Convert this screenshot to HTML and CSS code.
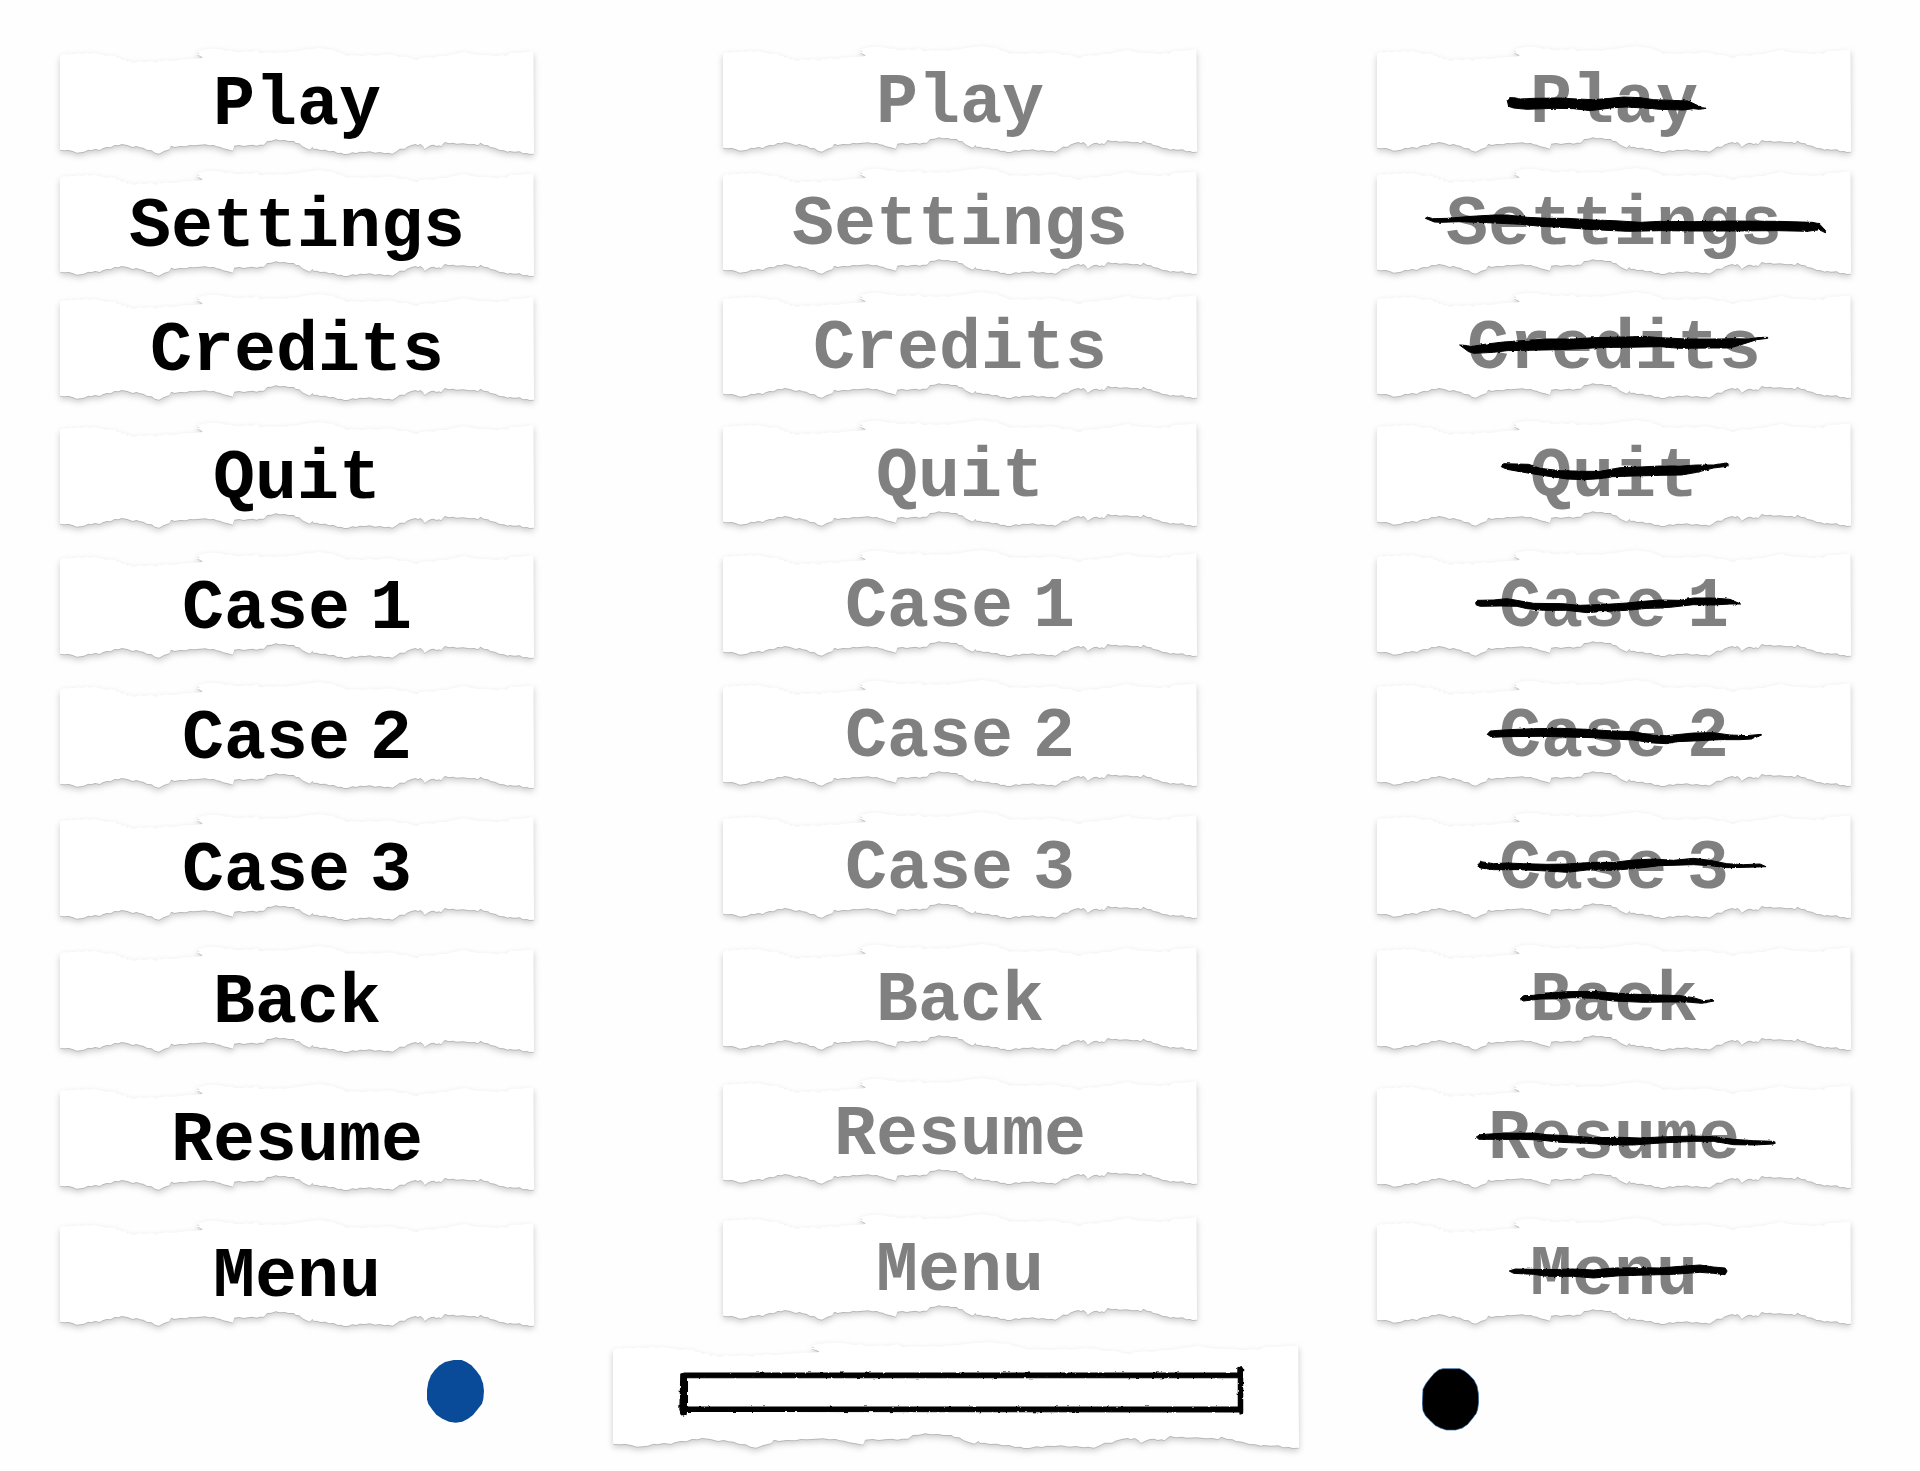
FILE: index.html
```html
<!DOCTYPE html>
<html lang="en">
<head>
<meta charset="utf-8">
<title>Menu buttons</title>
<link rel="stylesheet" href="styles.css">
</head>
<body>
<svg class="defs" width="0" height="0" aria-hidden="true">
  <symbol id="paper" viewBox="60 52 1423 318" preserveAspectRatio="none">
    <path d="M60 76L72 70 80 72 92 69 104 71 114 68 128 70 140 66 150 69 164 67 178 70 188 72 200 76 212 74 225 76 234 83 238 80 246 87 256 86 262 93 270 91 278 96 290 95 296 90 303 93 318 94 330 91 341 93 350 96 358 90 368 92 380 88 392 91 408 90 420 87 440 86 458 84 485 83 488 80 470 70 479 69 472 63 490 57 512 54 530 55 548 57 560 61 572 59 584 64 600 65 616 62 632 64 650 59 656 64 662 68 680 65 700 66 722 65 738 66 750 63 770 62 790 58 806 56 822 54 840 52 858 56 880 57 892 64 906 68 920 75 940 74 970 76 990 72 1010 75 1040 71 1062 73 1080 79 1100 78 1116 84 1130 89 1142 83 1160 80 1180 81 1200 76 1220 76 1240 70 1260 67 1275 63 1286 68 1310 72 1340 73 1375 77 1383 73 1400 75 1412 67 1440 66 1460 64 1482 62L1483 369 1470 370 1462 367 1450 368 1440 362 1424 363 1410 361 1404 363 1392 359 1380 358 1366 351 1352 349 1345 344 1334 343 1322 336 1315 344 1304 340 1290 341 1270 338 1250 339 1240 336 1228 338 1215 334 1204 347 1198 344 1190 346 1182 342 1174 343 1164 348 1155 355 1150 347 1142 340 1134 344 1128 340 1115 343 1102 348 1095 354 1080 354 1070 362 1058 369 1045 366 1036 368 1020 364 1006 366 990 362 976 364 960 363 950 367 938 365 926 369 915 371 904 366 894 367 882 361 868 362 856 357 842 358 830 354 822 355 818 349 810 357 798 352 788 347 778 338 768 337 762 331 745 331 735 328 720 329 708 326 695 330 682 331 672 342 660 342 650 345 638 342 624 344 612 346 598 343 583 345 579 360 564 356 550 353 540 348 530 347 522 343 508 344 496 341 480 342 462 344 450 343 438 347 420 346 404 349 394 345 388 356 372 361 357 369 345 366 335 359 322 358 310 351 300 350 290 346 278 349 262 343 245 340 236 344 224 343 212 350 200 349 188 353 180 358 166 355 152 359 145 357 132 363 110 366 98 361 86 358 72 359 60 357Z"/>
  </symbol>
  <filter id="ink" x="-5%" y="-50%" width="110%" height="200%">
    <feTurbulence type="fractalNoise" baseFrequency="0.09" numOctaves="2" seed="4"/>
    <feDisplacementMap in="SourceGraphic" scale="7" xChannelSelector="R" yChannelSelector="G"/>
  </filter>
</svg>

<main class="sheet">
  <div class="columns">
    <section class="column normal" aria-label="Normal">
      <button class="strip"><svg class="paper"><use href="#paper"/></svg><span class="label">Play</span></button>
      <button class="strip"><svg class="paper"><use href="#paper"/></svg><span class="label">Settings</span></button>
      <button class="strip"><svg class="paper"><use href="#paper"/></svg><span class="label">Credits</span></button>
      <button class="strip"><svg class="paper"><use href="#paper"/></svg><span class="label">Quit</span></button>
      <button class="strip"><svg class="paper"><use href="#paper"/></svg><span class="label">Case <span>1</span></span></button>
      <button class="strip"><svg class="paper"><use href="#paper"/></svg><span class="label">Case <span>2</span></span></button>
      <button class="strip"><svg class="paper"><use href="#paper"/></svg><span class="label">Case <span>3</span></span></button>
      <button class="strip"><svg class="paper"><use href="#paper"/></svg><span class="label">Back</span></button>
      <button class="strip"><svg class="paper"><use href="#paper"/></svg><span class="label">Resume</span></button>
      <button class="strip"><svg class="paper"><use href="#paper"/></svg><span class="label">Menu</span></button>
    </section>

    <section class="column hover" aria-label="Hover">
      <button class="strip"><svg class="paper"><use href="#paper"/></svg><span class="label">Play</span></button>
      <button class="strip"><svg class="paper"><use href="#paper"/></svg><span class="label">Settings</span></button>
      <button class="strip"><svg class="paper"><use href="#paper"/></svg><span class="label">Credits</span></button>
      <button class="strip"><svg class="paper"><use href="#paper"/></svg><span class="label">Quit</span></button>
      <button class="strip"><svg class="paper"><use href="#paper"/></svg><span class="label">Case <span>1</span></span></button>
      <button class="strip"><svg class="paper"><use href="#paper"/></svg><span class="label">Case <span>2</span></span></button>
      <button class="strip"><svg class="paper"><use href="#paper"/></svg><span class="label">Case <span>3</span></span></button>
      <button class="strip"><svg class="paper"><use href="#paper"/></svg><span class="label">Back</span></button>
      <button class="strip"><svg class="paper"><use href="#paper"/></svg><span class="label">Resume</span></button>
      <button class="strip"><svg class="paper"><use href="#paper"/></svg><span class="label">Menu</span></button>
    </section>

    <section class="column pressed" aria-label="Pressed">
      <button class="strip"><svg class="paper"><use href="#paper"/></svg><span class="label">Play</span>
        <svg class="strike" viewBox="50 47 1423 318" preserveAspectRatio="none"><path d="M441 210L448 202 462 202 480 206 520 204 600 203 650 206 700 208 750 204 790 200 840 202 880 208 960 211 985 212 1005 222 1027 232 1038 234 1018 237 1000 235 970 239 900 237 850 233 800 230 760 232 690 241 640 235 580 234 500 237 460 233 445 228Z"/></svg></button>
      <button class="strip"><svg class="paper"><use href="#paper"/></svg><span class="label">Settings</span>
        <svg class="strike" viewBox="48 417 1423 318" preserveAspectRatio="none"><path d="M193 568L200 564 215 569 260 568 330 562 400 558 440 558 500 565 560 568 620 568 700 573 760 575 840 580 900 577 1000 578 1100 576 1250 577 1355 580 1375 584 1395 605 1394 611 1385 607 1375 602 1340 607 1250 605 1100 606 1000 606 900 605 800 607 700 602 600 595 540 592 480 586 400 582 300 578 240 580 220 579Z"/></svg></button>
      <button class="strip"><svg class="paper"><use href="#paper"/></svg><span class="label">Credits</span>
        <svg class="strike" viewBox="50 37 1423 318" preserveAspectRatio="none"><path d="M298 196L315 197 330 201 380 193 430 187 500 182 560 178 640 178 700 174 800 172 850 170 900 174 980 178 1080 178 1120 177 1165 178 1200 173 1223 173 1223 176 1190 180 1150 193 1110 205 1060 205 960 206 900 201 800 203 740 203 600 210 500 212 440 213 400 218 340 221 325 216Z"/></svg></button>
      <button class="strip"><svg class="paper"><use href="#paper"/></svg><span class="label">Quit</span>
        <svg class="strike" viewBox="50 420 1423 318" preserveAspectRatio="none"><path d="M423 560L430 551 470 552 505 553 540 565 600 572 680 574 720 574 780 563 840 561 900 558 960 558 1010 555 1060 555 1100 549 1107 554 1100 559 1060 564 1010 577 965 585 900 586 820 588 760 590 720 596 670 599 620 597 560 588 520 582 480 575 440 568Z"/></svg></button>
      <button class="strip"><svg class="paper"><use href="#paper"/></svg><span class="label">Case <span>1</span></span>
        <svg class="strike" viewBox="50 30 1423 318" preserveAspectRatio="none"><path d="M346 188L352 181 400 180 440 176 470 181 520 190 600 191 660 196 740 193 800 189 850 184 900 180 960 181 1000 174 1060 174 1110 178 1130 187 1142 192 1130 192 1110 192 1060 195 1000 194 930 202 860 205 800 211 720 215 680 218 620 211 550 211 500 206 470 199 420 198 360 199 348 195Z"/></svg></button>
      <button class="strip"><svg class="paper"><use href="#paper"/></svg><span class="label">Case <span>2</span></span>
        <svg class="strike" viewBox="50 417 1423 318" preserveAspectRatio="none"><path d="M381 580L390 570 430 567 470 565 520 563 600 562 680 565 760 570 820 572 880 583 920 584 1000 576 1060 575 1110 582 1160 584 1203 580 1205 582 1175 594 1140 596 1080 596 1000 600 950 602 920 608 880 606 820 597 760 594 700 590 620 588 540 586 440 587 395 589Z"/></svg></button>
      <button class="strip"><svg class="paper"><use href="#paper"/></svg><span class="label">Case <span>3</span></span>
        <svg class="strike" viewBox="50 42 1423 318" preserveAspectRatio="none"><path d="M353 200L362 191 400 197 440 195 490 197 560 199 620 198 700 193 760 193 820 186 880 183 940 187 1000 181 1050 187 1100 197 1150 200 1200 198 1218 206 1160 208 1100 209 1050 203 1000 200 900 203 840 210 760 217 680 216 620 223 560 219 480 215 400 215 360 210Z"/></svg></button>
      <button class="strip"><svg class="paper"><use href="#paper"/></svg><span class="label">Back</span>
        <svg class="strike" viewBox="50 435 1423 318" preserveAspectRatio="none"><path d="M480 600L490 590 520 589 560 583 620 578 700 577 760 582 830 586 900 588 960 590 1000 596 1030 605 1060 602 1062 606 1025 613 980 609 920 609 850 610 760 606 700 598 640 596 580 599 540 600 490 606Z"/></svg></button>
      <button class="strip"><svg class="paper"><use href="#paper"/></svg><span class="label">Resume</span>
        <svg class="strike" viewBox="50 69 1423 318" preserveAspectRatio="none"><path d="M348 234L360 227 420 223 520 222 560 227 620 230 700 236 780 235 840 237 900 234 1000 231 1060 233 1120 241 1180 245 1240 247 1248 251 1240 255 1180 258 1120 257 1060 247 1000 247 900 252 820 258 760 258 680 253 600 250 540 243 480 241 380 241 356 241Z"/></svg></button>
      <button class="strip"><svg class="paper"><use href="#paper"/></svg><span class="label">Menu</span>
        <svg class="strike" viewBox="50 477 1423 318" preserveAspectRatio="none"><path d="M447 636L465 630 520 631 560 632 640 630 700 633 760 627 840 626 900 627 960 622 1020 618 1060 624 1095 627 1101 636 1095 647 1060 643 1020 640 940 646 860 648 780 650 700 657 640 652 560 652 520 646 460 643Z"/></svg></button>
    </section>
  </div>

  <div class="controls">
    <button class="knob knob-blue" aria-label="Slider handle">
      <svg width="57" height="63" viewBox="80 60 171 189"><path fill="#0a4b99" d="M160 60L184 60 198 66 213 76 228 92 240 109 248 130 251 152 249 176 245 191 232 208 218 225 203 236 186 245 166 248 146 245 126 236 108 224 95 208 84 192 80 178 80 150 84 126 92 106 103 91 116 77 134 66Z"/></svg>
    </button>
    <div class="slider">
      <svg class="paper"><use href="#paper"/></svg>
      <svg class="frame" viewBox="28 38 1495 318" preserveAspectRatio="none"><path d="M176 134L184 131 1390 131 1390 115 1397 112 1400 118 1400 252 1395 254 1394 248 188 246 187 256 181 260 176 254 174 240ZM190 145L190 233 1391 233 1391 145Z" fill-rule="evenodd"/></svg>
      <input class="range" type="range" aria-label="Volume">
    </div>
    <button class="knob knob-black" aria-label="Slider handle, pressed">
      <svg width="57" height="63" viewBox="65 54 171 189"><path stroke="#2c66ab" stroke-width="2" d="M128 56L178 56 192 63 206 74 221 90 230 108 234 130 235 156 232 178 228 190 216 206 202 223 186 234 166 240 138 240 120 234 104 226 90 212 76 198 68 182 66 160 68 118 76 102 88 86 102 70 116 59Z"/></svg>
    </button>
  </div>
</main>
</body>
</html>
```
FILE: styles.css
```css
* { box-sizing: border-box; }

body {
  margin: 0;
  background: #fefefe;
  font-family: "Liberation Mono", "Courier New", monospace;
}

button {
  padding: 0;
  border: 0;
  background: none;
  font: inherit;
  cursor: pointer;
}

.defs { position: absolute; }

.sheet { padding: 46px 0 22px; }

.columns {
  display: grid;
  grid-template-columns: 60fr 474fr 189fr 474fr 180fr 474fr 69fr;
}

.column {
  display: grid;
  grid-template-rows: 122px 124px 128px 130px 130px 132px 132px 138px 136px 124px;
  align-items: start;
}

.normal { grid-column: 2; padding-top: 2px; margin-bottom: -2px; color: #000; }
.hover { grid-column: 4; grid-template-rows: 122px 124px 128px 130px 130px 132px 132px 134px 136px 128px; color: #808080; }
.pressed { grid-column: 6; color: #808080; }

.strip {
  position: relative;
  display: flex;
  align-items: center;
  justify-content: center;
  width: 100%;
  height: 106px;
  padding-top: 10px;
  color: inherit;
}

.paper {
  position: absolute;
  inset: 0;
  width: 100%;
  height: 100%;
  overflow: visible;
  fill: #fff;
  filter: drop-shadow(0 1px 0 rgba(0, 0, 0, 0.14)) drop-shadow(0 3px 3px rgba(0, 0, 0, 0.2));
}

.label {
  position: relative;
  display: flex;
  gap: 20px;
  font-size: 70px;
  font-weight: 700;
  line-height: 80px;
}

.strike,
.frame {
  position: absolute;
  inset: 0;
  width: 100%;
  height: 100%;
  overflow: visible;
  fill: #000;
  stroke: #000;
  stroke-width: 3px;
}

.strike path,
.frame path { filter: url(#ink); }

.controls {
  display: grid;
  grid-template-columns: 427fr 57fr 129fr 686fr 123fr 57fr 441fr;
  align-items: start;
}

.knob svg { display: block; }
.knob-blue { grid-column: 2; padding-top: 18px; }
.knob-black { grid-column: 6; padding-top: 26px; }

.slider {
  position: relative;
  grid-column: 4;
  display: flex;
  align-items: center;
  height: 106px;
  padding: 0 56px 0 68px;
}

.range {
  position: relative;
  width: 100%;
  height: 40px;
  margin: 0;
  appearance: none;
  background: transparent;
}

.range::-webkit-slider-thumb {
  appearance: none;
  width: 57px;
  height: 40px;
  background: transparent;
}
```
